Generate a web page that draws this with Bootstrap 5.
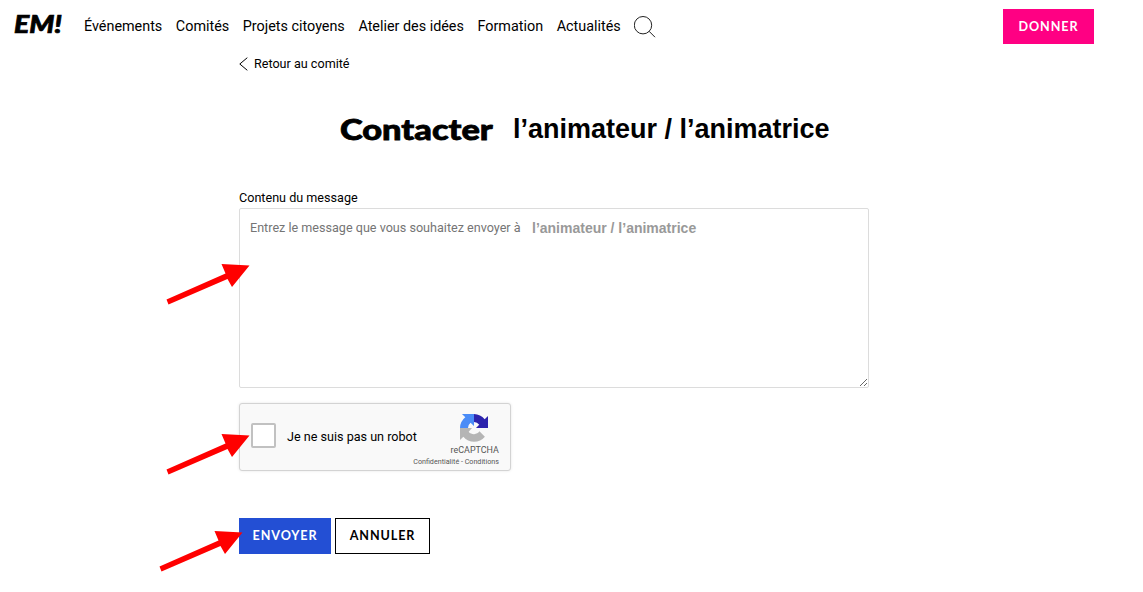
<!DOCTYPE html>
<html lang="fr">
<head>
  <meta charset="UTF-8" />
  <meta name="viewport" content="width=device-width, initial-scale=1.0" />
  <title>Contacter l’animateur / l’animatrice</title>
  <link href="https://cdn.jsdelivr.net/npm/bootstrap@5.3.0/dist/css/bootstrap.min.css" rel="stylesheet">
  <style>
    body {
      background: #fff;
      color: #000;
      font-family: Roboto, "Liberation Sans", sans-serif;
      min-height: 592px;
      position: relative;
      overflow: hidden;
    }
    .site-header {
      height: 53px;
      padding: 0 49px 0 14px;
    }
    .site-logo {
      width: 48px;
      height: 22px;
      margin: 0 22px 4px 0;
      overflow: visible;
      flex: none;
    }
    .site-logo text {
      font: italic 900 24px Lato, sans-serif;
      stroke: #000;
      stroke-width: .7px;
    }
    .site-nav {
      gap: 13.6px;
    }
    .site-nav .nav-link {
      color: #000;
      font-size: 14.36px;
      line-height: 20px;
      padding: 0;
      white-space: nowrap;
    }
    .btn-em {
      font-family: Lato, sans-serif;
      font-size: 12.6px;
      font-weight: 700;
      line-height: 18px;
      letter-spacing: .9px;
      border-radius: 0;
      padding: 0 0 1px;
      display: flex;
      align-items: center;
      justify-content: center;
    }
    .btn-donate {
      width: 91px;
      height: 35px;
      padding: 1px 0 0;
      color: #fff;
      background: #ff0083;
    }
    .page-content {
      width: 630px;
      margin-left: 239px;
    }
    .back-link {
      color: #000;
      font-size: 12.6px;
      line-height: 20px;
      gap: 6px;
      padding-top: 1px;
    }
    .page-title {
      height: 40px;
      margin: 35px 0 0 101px;
      white-space: nowrap;
    }
    .title-main {
      font: 900 29px/40px Lato, sans-serif;
      width: 173px;
      transform: scaleX(1.185);
      transform-origin: 0 0;
      -webkit-text-stroke: .8px #000;
    }
    .title-who {
      font: 700 27px/40px "Liberation Sans", sans-serif;
    }
    .msg-label {
      font-size: 12.6px;
      line-height: 20px;
      margin: 39px 0 0;
    }
    .msg-box {
      height: 180px;
    }
    .msg-box textarea {
      height: 180px;
      border: 1px solid #dcdcdc;
      border-radius: 2px;
      font-size: 12.6px;
      line-height: 18px;
      padding: 10px;
    }
    .msg-box textarea::placeholder {
      color: #757575;
    }
    .msg-who {
      position: absolute;
      left: 293px;
      top: 11px;
      color: #999;
      font: 700 14px/18px "Liberation Sans", sans-serif;
      white-space: nowrap;
      pointer-events: none;
    }
    .captcha {
      width: 272px;
      height: 68px;
      margin-top: 15px;
      padding: 0 11px;
      background: #f9f9f9;
      border: 1px solid #d3d3d3;
      border-radius: 3px;
      box-shadow: 0 0 3px rgba(0, 0, 0, .1);
    }
    .captcha .form-check-input {
      width: 25px;
      height: 25px;
      margin: -3px 11px 0 0;
      border: 2px solid #c1c1c1;
      border-radius: 2px;
      flex: none;
    }
    .captcha-label {
      font-size: 12.6px;
      white-space: nowrap;
    }
    /* the links line runs a little under the label */
    .captcha-brand {
      width: 86px;
      margin-left: -4px;
      padding-top: 10px;
      color: #555;
    }
    .captcha-brand svg {
      width: 28px;
      height: 28px;
      margin-right: 11px;
    }
    .captcha-name {
      font-size: 8.95px;
      line-height: 14px;
      margin-top: 1px;
    }
    .captcha-links {
      font-size: 7.15px;
      line-height: 9px;
      white-space: nowrap;
    }
    .form-actions {
      margin-top: 47px;
      gap: 4px;
    }
    .form-actions .btn-em {
      height: 36px;
    }
    .btn-send {
      width: 92px;
      color: #fff;
      background: #234fd4;
    }
    .btn-cancel {
      width: 95px;
      color: #000;
      border: 1px solid #000;
    }
    /* arrows drawn over the form */
    .arrows {
      position: absolute;
      left: 0;
      top: 0;
      pointer-events: none;
    }
  </style>
</head>
<body>
  <header class="site-header d-flex align-items-center">
    <svg class="site-logo" viewBox="0 0 48 22" aria-label="EM!"><text x="0" y="19" textLength="48" lengthAdjust="spacingAndGlyphs">EM!</text></svg>
    <nav class="site-nav nav flex-nowrap align-items-center">
      <a class="nav-link" href="#">Événements</a>
      <a class="nav-link" href="#">Comités</a>
      <a class="nav-link" href="#">Projets citoyens</a>
      <a class="nav-link" href="#">Atelier des idées</a>
      <a class="nav-link" href="#">Formation</a>
      <a class="nav-link" href="#">Actualités</a>
      <svg width="22" height="22" viewBox="0 0 22 22" fill="none" stroke="#222" stroke-width="1"><circle cx="9" cy="9.2" r="8.7"/><path d="M15 15.200l6 6"/></svg>
    </nav>
    <a class="btn btn-em btn-donate ms-auto" href="#">DONNER</a>
  </header>

  <main class="page-content">
    <a class="back-link d-flex align-items-center text-decoration-none" href="#">
      <svg width="9" height="14" viewBox="0 0 9 14" fill="none" stroke="#000"><path d="M8.300.7L.8 7l7.500 6.300"/></svg>
      Retour au comité
    </a>
    <h1 class="page-title d-flex">
      <span class="title-main">Contacter</span>
      <span class="title-who">l’animateur / l’animatrice</span>
    </h1>

    <form>
      <label class="msg-label d-block" for="message">Contenu du message</label>
      <div class="msg-box position-relative">
        <textarea class="form-control" id="message" placeholder="Entrez le message que vous souhaitez envoyer à"></textarea>
        <span class="msg-who">l’animateur / l’animatrice</span>
      </div>

      <div class="captcha d-flex align-items-center">
        <input class="form-check-input" type="checkbox" id="robot">
        <label class="captcha-label" for="robot">Je ne suis pas un robot</label>
        <div class="captcha-brand align-self-start text-end">
          <svg class="d-block ms-auto" viewBox="0 0 64 64">
            <path fill="#2d24ad" d="M64 32V4.500l-7.600 7.600A32 32 0 0 0 32 0v18.500a15 15 0 0 1 12 5.800L36.500 32z"/>
            <path fill="#4a8cf7" d="M32 0H4.500l7.600 7.600A32 32 0 0 0 0 32h18.300a15 15 0 0 1 5.900-12L32 27.500z"/>
            <path fill="#b5b5b5" d="M0 32v27.500l7.600-7.600a32 32 0 0 0 49.300 0L44.400 39.300a15 15 0 0 1-24.600 1L27.500 32z"/>
          </svg>
          <div class="captcha-name">reCAPTCHA</div>
          <div class="captcha-links">Confidentialité - Conditions</div>
        </div>
      </div>

      <div class="form-actions d-flex">
        <button class="btn btn-em btn-send" type="button">ENVOYER</button>
        <button class="btn btn-em btn-cancel" type="button">ANNULER</button>
      </div>
    </form>
  </main>

  <svg class="arrows" width="1143" height="592" viewBox="0 0 1143 592">
    <defs>
      <path id="arrow" fill="#f00" d="M0 35.500L59 9.500 55 0 83 1.500 65.500 23 61 15 2 40.500z"/>
    </defs>
    <use href="#arrow" x="166.500" y="264"/>
    <use href="#arrow" x="166.500" y="434"/>
    <use href="#arrow" x="159.500" y="531"/>
  </svg>

  <script src="https://cdn.jsdelivr.net/npm/bootstrap@5.3.0/dist/js/bootstrap.bundle.min.js"></script>
</body>
</html>
